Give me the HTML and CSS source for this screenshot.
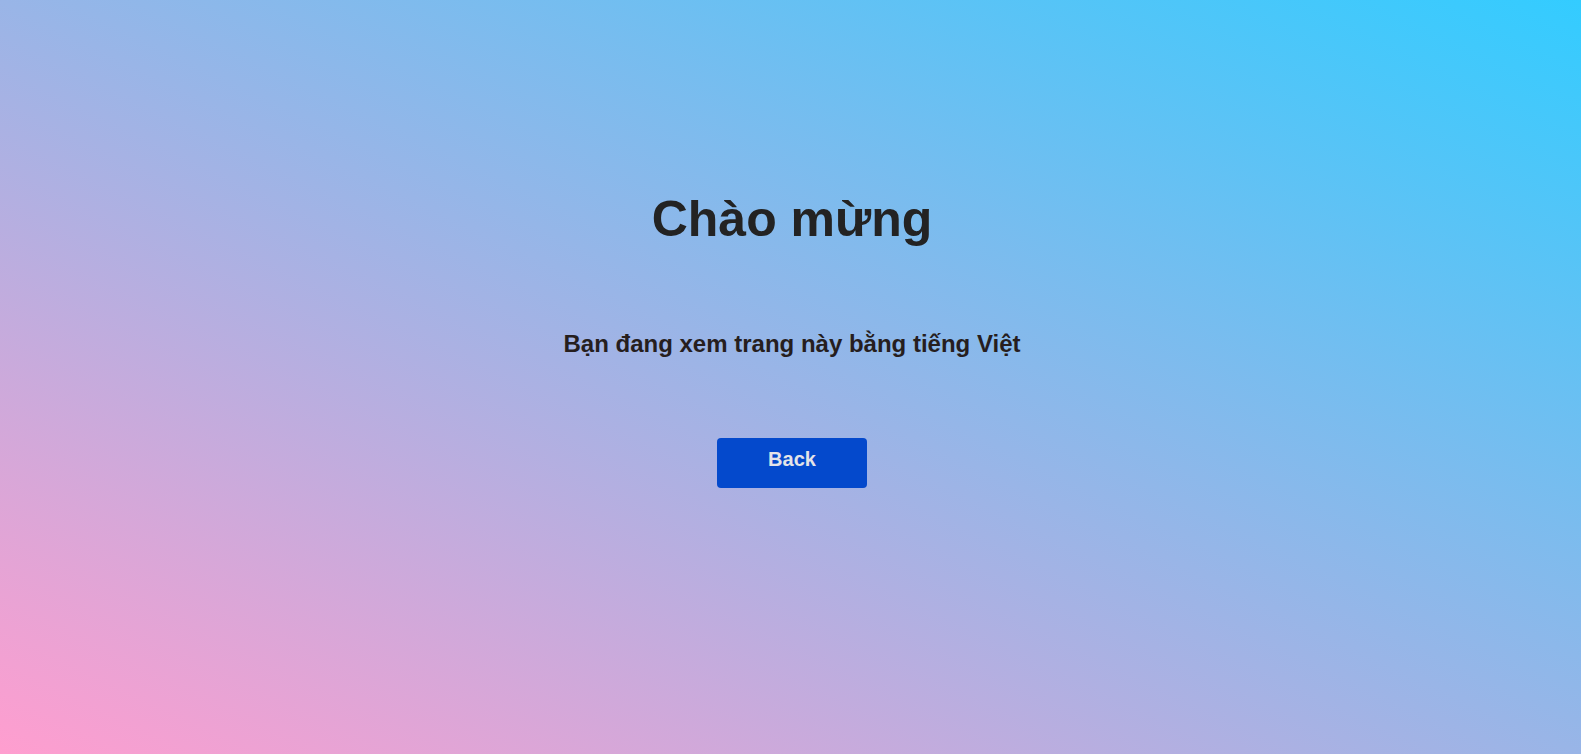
FILE: index.html
```html
<!DOCTYPE html>
<html lang="vi">
<head>
<meta charset="utf-8">
<title>Chào mừng</title>
<link rel="stylesheet" href="styles.css">
</head>
<body>
<main class="page">
  <h1 class="title">Chào mừng</h1>
  <p class="subtitle">Bạn đang xem trang này bằng tiếng Việt</p>
  <button class="back-btn" type="button">Back</button>
</main>
</body>
</html>
```

FILE: styles.css
```css
html, body {
  margin: 0;
  padding: 0;
  height: 100%;
}
body {
  background: linear-gradient(to top right, #ff9ecf, #33ccff);
  font-family: "Liberation Sans", Arial, sans-serif;
  color: #222;
}
.page {
  display: flex;
  flex-direction: column;
  align-items: center;
  padding: 191px 0 0 3px;
  text-align: center;
}
.title {
  margin: 0;
  font-size: 50px;
  font-weight: bold;
  line-height: 57px;
  color: #232323;
}
.subtitle {
  margin: 82px 0 0;
  font-size: 24px;
  font-weight: bold;
  line-height: 28px;
  color: #261e1e;
}
.back-btn {
  margin-top: 80px;
  width: 150px;
  height: 50px;
  padding: 10px 0 17px;
  border: none;
  border-radius: 4px;
  background: #0449cc;
  color: #e4e4e8;
  font-family: "Liberation Sans", Arial, sans-serif;
  font-size: 20px;
  font-weight: bold;
  line-height: 23px;
  cursor: pointer;
}
```
